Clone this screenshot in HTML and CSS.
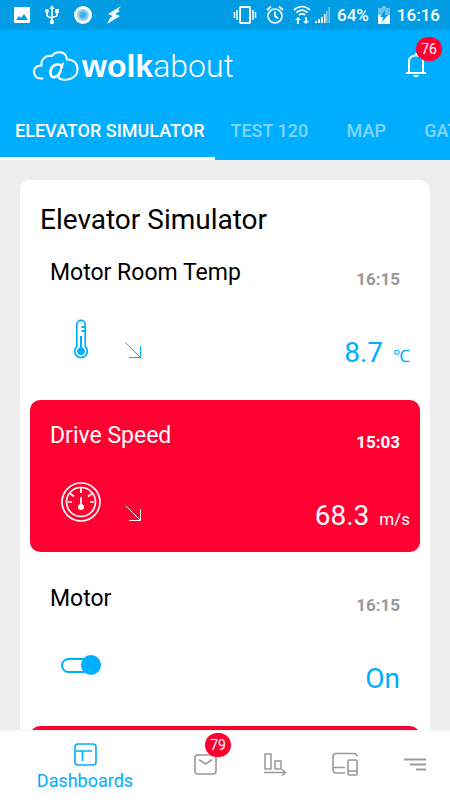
FILE: index.html
```
<!DOCTYPE html>
<html lang="en">
<head>
<meta charset="utf-8">
<meta name="viewport" content="width=device-width, initial-scale=1">
<title>WolkAbout</title>
<link rel="stylesheet" href="styles.css">
</head>
<body>
<div class="status">
  <div class="status-left">
    <svg width="18" height="18" viewBox="0 0 18 18"><path fill="#fff" fill-rule="evenodd" d="M2 1h14a1 1 0 0 1 1 1v14a1 1 0 0 1-1 1H2a1 1 0 0 1-1-1V2a1 1 0 0 1 1-1zm1 13h12l-4-6-3 4-2-2z"/></svg>
    <svg width="14" height="20" viewBox="0 0 14 20" fill="none" stroke="#fff" stroke-width="1.6"><path d="M7 3v14M2 6v4c0 2 2 2 5 3M12 7v3c0 1-2 2-5 2"/><path d="M7 0l2.500 4h-5z" fill="#fff" stroke="none"/><circle cx="7" cy="17" r="2.200" fill="#fff" stroke="none"/><circle cx="2" cy="6" r="1.900" fill="#fff" stroke="none"/><path d="M10 4h4v4h-4z" fill="#fff" stroke="none"/></svg>
    <svg width="20" height="20" viewBox="0 0 20 20"><circle cx="10" cy="10" r="9" fill="#fff"/><circle cx="10" cy="10" r="6" fill="#8dd0f4"/><circle cx="10" cy="10" r="3.500" fill="#40b2ec"/></svg>
    <svg width="14" height="20" viewBox="0 0 14 20"><path fill="#fff" d="M14 1L1 9l5 2-3 2-3 6 13-8-5-2 5-3-2-1z"/></svg>
  </div>
  <div class="status-right">
    <svg width="24" height="18" viewBox="0 0 24 18" fill="none" stroke="#fff" stroke-width="2"><rect x="7" y="1" width="10" height="16" rx="1"/><path stroke-width="1.500" d="M4 4v10M1.500 6v6M20 4v10M22.500 6v6"/></svg>
    <svg class="alarm" width="18" height="20" viewBox="0 0 18 20" fill="none" stroke="#fff" stroke-width="1.700"><circle cx="9" cy="11" r="7"/><path d="M9 6.500V11l3 2.500M1 5l4-3.500M17 5l-4-3.500"/></svg>
    <svg class="wifi" width="18" height="20" viewBox="0 0 18 20" fill="none" stroke="#fff" stroke-width="1.700"><path d="M1 5c5-4.500 11-4.500 16 0M3.500 7.500c3.500-3 7.500-3 11 0M6 10c2-1.500 4-1.500 6 0"/><path fill="#fff" stroke="none" d="M2 15l3-3 3 3H6v4H4v-4zM10 16h2v-4h2v4h2l-3 3z"/></svg>
    <svg width="15" height="16" viewBox="0 0 15 16"><path fill="#fff" d="M0 14h2v2H0zM3 12h2v4H3zM6 10h2v6H6zM9 7h1.500v9H9z"/><path fill="#7dcaf2" d="M11 4h1.500v12H11zM13.500 0H15v16h-1.500z"/></svg>
    <span>64%</span>
    <svg class="battery" width="12" height="18" viewBox="0 0 12 18"><path fill="#66c2f0" d="M4 0h4v2h4v7H0V2h4z"/><path fill="#fff" d="M0 9h12v9H0z"/><path fill="#009ce4" d="M7 4v5h3l-6 7 1-5H2z"/></svg>
    <span>16:16</span>
  </div>
</div>
<header class="header">
  <div class="brand-row">
    <div class="brand">
      <svg width="47" height="32" viewBox="0 0 47 32" fill="none" stroke="#fff" stroke-width="2" stroke-linecap="round"><path d="M10.500 28.500C5 29 2 26 2 22c0-4.500 3-6.500 7.500-6.500C8.500 9 14 5 20 6c4-5.500 14-5.500 15 3.500 7 0 11 4.500 10.500 10.500-.5 7-8 11-15 9.500C25 29 26.500 26 27.500 23l3.500-9.500"/><path stroke-width="2.600" d="M30 17c-2-5-11-2.500-11.500 5-.5 8 7.500 6 10-1"/></svg>
      <span class="wolk">wolk</span><span class="about">about</span>
    </div>
    <button class="bell" type="button" aria-label="Notifications">
      <svg width="20" height="26" viewBox="0 0 20 26" fill="none" stroke="#fff" stroke-width="2"><path d="M3 20V9C3 5 5.500 2.500 10 2.500S17 5 17 9v11M0 20h20"/><path stroke="none" fill="#fff" d="M7 22h6c-1 3-5 3-6 0zM9 0h2v3H9z"/></svg>
      <span class="badge">76</span>
    </button>
  </div>
  <nav class="tabs">
    <a class="tab active" href="#">ELEVATOR SIMULATOR</a>
    <a class="tab" href="#">TEST 120</a>
    <a class="tab" href="#">MAP</a>
    <a class="tab" href="#">GATEWAY</a>
  </nav>
</header>
<main class="content">
  <section class="card">
    <h1>Elevator Simulator</h1>
    <article class="widget">
      <div class="top"><h2>Motor Room Temp</h2><time>16:15</time></div>
      <div class="reading">
        <svg class="symbol" width="40" height="40" viewBox="0 0 40 40" fill="none" stroke="currentColor" stroke-width="1.700"><path d="M15.800 27.500V5.500a4.200 4.200 0 0 1 8.400 0v22a6.300 6.300 0 1 1-8.400 0z"/><path stroke-width="2" d="M20 17v14M20.500 8H24M20.500 12H24"/><circle cx="20" cy="32.300" r="3.800" fill="currentColor" stroke="none"/></svg>
        <svg class="trend" width="16" height="16" viewBox="0 0 16 16" fill="none" stroke="currentColor"><path d="M.5.5l15 15M15.500 4v11.500H4"/></svg>
        <span class="value">8.7</span><span class="unit">℃</span>
      </div>
    </article>
    <article class="widget alert">
      <div class="top"><h2>Drive Speed</h2><time>15:03</time></div>
      <div class="reading">
        <svg class="symbol" width="40" height="40" viewBox="0 0 40 40" fill="none" stroke="currentColor" stroke-width="1.700"><circle cx="20" cy="20" r="19"/><circle cx="20" cy="20" r="14.500"/><path d="M20 6v5M7 20h4M29 20h4M9 11.500l4 3M31 11.500l-4 3M20 15v8"/><circle cx="20" cy="25" r="3" fill="currentColor" stroke="none"/></svg>
        <svg class="trend" width="16" height="16" viewBox="0 0 16 16" fill="none" stroke="currentColor"><path d="M.5.5l15 15M15.500 4v11.500H4"/></svg>
        <span class="value">68.3</span><span class="unit">m/s</span>
      </div>
    </article>
    <article class="widget">
      <div class="top"><h2><label for="motor">Motor</label></h2><time>16:15</time></div>
      <div class="reading">
        <input class="switch" id="motor" type="checkbox" checked>
        <span class="value">On</span><span class="unit"></span>
      </div>
    </article>
    <article class="widget alert"></article>
  </section>
</main>
<nav class="bottom">
  <a class="item current" href="#">
    <svg width="24" height="24" viewBox="0 0 24 24" fill="none" stroke="currentColor" stroke-width="1.600"><rect x="2" y="1" width="21" height="21" rx="3"/><path d="M3 8h16M9.500 8v10"/></svg>
    <span>Dashboards</span>
  </a>
  <a class="item" href="#" aria-label="Messages">
    <svg width="24" height="24" viewBox="0 0 24 24" fill="none" stroke="currentColor" stroke-width="1.600"><rect x="2" y="3" width="21" height="19" rx="3"/><path stroke-linecap="round" d="M6.500 8l6 4 6-4"/></svg>
    <span class="badge">79</span>
  </a>
  <a class="item" href="#" aria-label="Reports">
    <svg width="24" height="24" viewBox="0 0 24 24" fill="none" stroke="currentColor" stroke-width="1.500"><path d="M2 2h6v15H2zM12 9h6v8h-6zM1 20.500h21M19 17.500l3.500 3-3.500 3"/></svg>
  </a>
  <a class="item" href="#" aria-label="Devices">
    <svg width="26" height="24" viewBox="0 0 26 24" fill="none" stroke="currentColor" stroke-width="1.600"><path d="M25 4.500C25 2.500 24 1.500 22 1.500H4c-2 0-3 1-3 3V17c0 2.500 1 4 3 4h9M1 15.500h12"/><rect x="16" y="8" width="9" height="15" rx="1"/><path d="M16 19h9"/></svg>
  </a>
  <a class="item" href="#" aria-label="More">
    <svg width="24" height="24" viewBox="0 0 24 24" fill="none" stroke="currentColor" stroke-width="1.800"><path d="M1 7.500h22M7 12.500h16M13 17.500h10"/></svg>
  </a>
</nav>
</body>
</html>
```

FILE: styles.css
```
* { box-sizing: border-box; }
body {
  margin: 0;
  height: 100vh;
  display: flex;
  flex-direction: column;
  overflow: hidden;
  background: #ededed;
  color: #000;
  font-family: Roboto, "Liberation Sans", sans-serif;
}
svg { display: block; flex: none; }
a { color: inherit; text-decoration: none; }
.status {
  flex: none;
  height: 30px;
  padding: 0 10px 0 13px;
  display: flex;
  justify-content: space-between;
  align-items: center;
  background: #009ce4;
  color: #fff;
  font-size: 17px;
  font-weight: 500;
}
.status-left, .status-right { display: flex; align-items: center; }
.status-left { gap: 14px; }
.status-right { gap: 7px; }
.alarm, .wifi, .battery { margin-left: 2px; }
.wifi { margin-right: -3px; }
.header { flex: none; background: #00aeff; color: #fff; }
.brand-row {
  height: 72px;
  padding: 0 24px 0 32px;
  display: flex;
  align-items: center;
  justify-content: space-between;
}
.brand { display: flex; align-items: center; line-height: 36px; }
.wolk {
  margin-left: 3px;
  font-family: "Liberation Sans", sans-serif;
  font-size: 32px;
  font-weight: 700;
}
.about { font-size: 32px; font-weight: 300; }
.bell {
  position: relative;
  padding: 0;
  border: 0;
  background: none;
  color: #fff;
  font: inherit;
}
.badge {
  position: absolute;
  left: 10px;
  top: -16px;
  width: 26px;
  height: 24px;
  border-radius: 12px;
  background: #ff0030;
  color: #fff;
  font-size: 14px;
  line-height: 24px;
  text-align: center;
}
.tabs {
  display: flex;
  height: 58px;
  overflow: hidden;
  white-space: nowrap;
}
.tab {
  flex: none;
  min-width: 90px;
  padding: 0 11px 0 15px;
  border-bottom: 3px solid transparent;
  color: #80d6ff;
  font-size: 18px;
  font-weight: 500;
  line-height: 58px;
  text-align: center;
}
.tab.active { border-color: #fff; color: #fff; }
.content { flex: 1; min-height: 0; padding: 20px 20px 0; overflow: hidden; }
.card {
  padding: 20px 10px 10px;
  border-radius: 10px;
  background: #fff;
}
h1 {
  margin: 0;
  padding: 0 10px;
  font-size: 28px;
  font-weight: 400;
  line-height: 40px;
}
.widget {
  height: 152px;
  margin: 0 0 11px;
  padding: 17px 10px 4px 20px;
  border-radius: 10px;
  color: #00aeff;
}
h1 + .widget { margin-top: -3px; }
.alert { background: #ff0030; color: #fff; }
.top { display: flex; justify-content: space-between; padding-right: 10px; }
h2 {
  margin: 0;
  color: #000;
  font-size: 23px;
  font-weight: 400;
  line-height: 38px;
}
time {
  padding-top: 13px;
  color: #999;
  font-size: 17px;
  font-weight: 700;
  line-height: 24px;
}
.alert h2, .alert time { color: #fff; }
.reading { display: flex; align-items: baseline; padding-left: 11px; height: 94px; }
.symbol { align-self: center; }
.trend { align-self: flex-end; margin: 0 0 28px 24px; }
.value { margin-left: auto; font-size: 28px; line-height: 122px; }
.unit { margin-left: 10px; font-size: 17px; }
.switch {
  appearance: none;
  position: relative;
  align-self: center;
  width: 30px;
  height: 15px;
  margin: 0 10px 0 0;
  border: 2px solid #00aeff;
  border-radius: 8px;
}
.switch:checked::after {
  content: "";
  position: absolute;
  right: -12px;
  top: -5px;
  width: 20px;
  height: 20px;
  border-radius: 50%;
  background: #00aeff;
}
.bottom {
  flex: none;
  display: flex;
  height: 70px;
  border-top: 1px solid #f4f4f4;
  background: #fff;
  color: #999;
}
.item {
  position: relative;
  flex: 70;
  display: flex;
  flex-direction: column;
  align-items: center;
  justify-content: center;
  padding-bottom: 3px;
}
.item .badge { left: 50%; top: 2px; }
.current {
  flex: 170;
  padding: 6px 0 0;
  color: #00aeff;
  font-size: 18px;
  line-height: 28px;
}
```
